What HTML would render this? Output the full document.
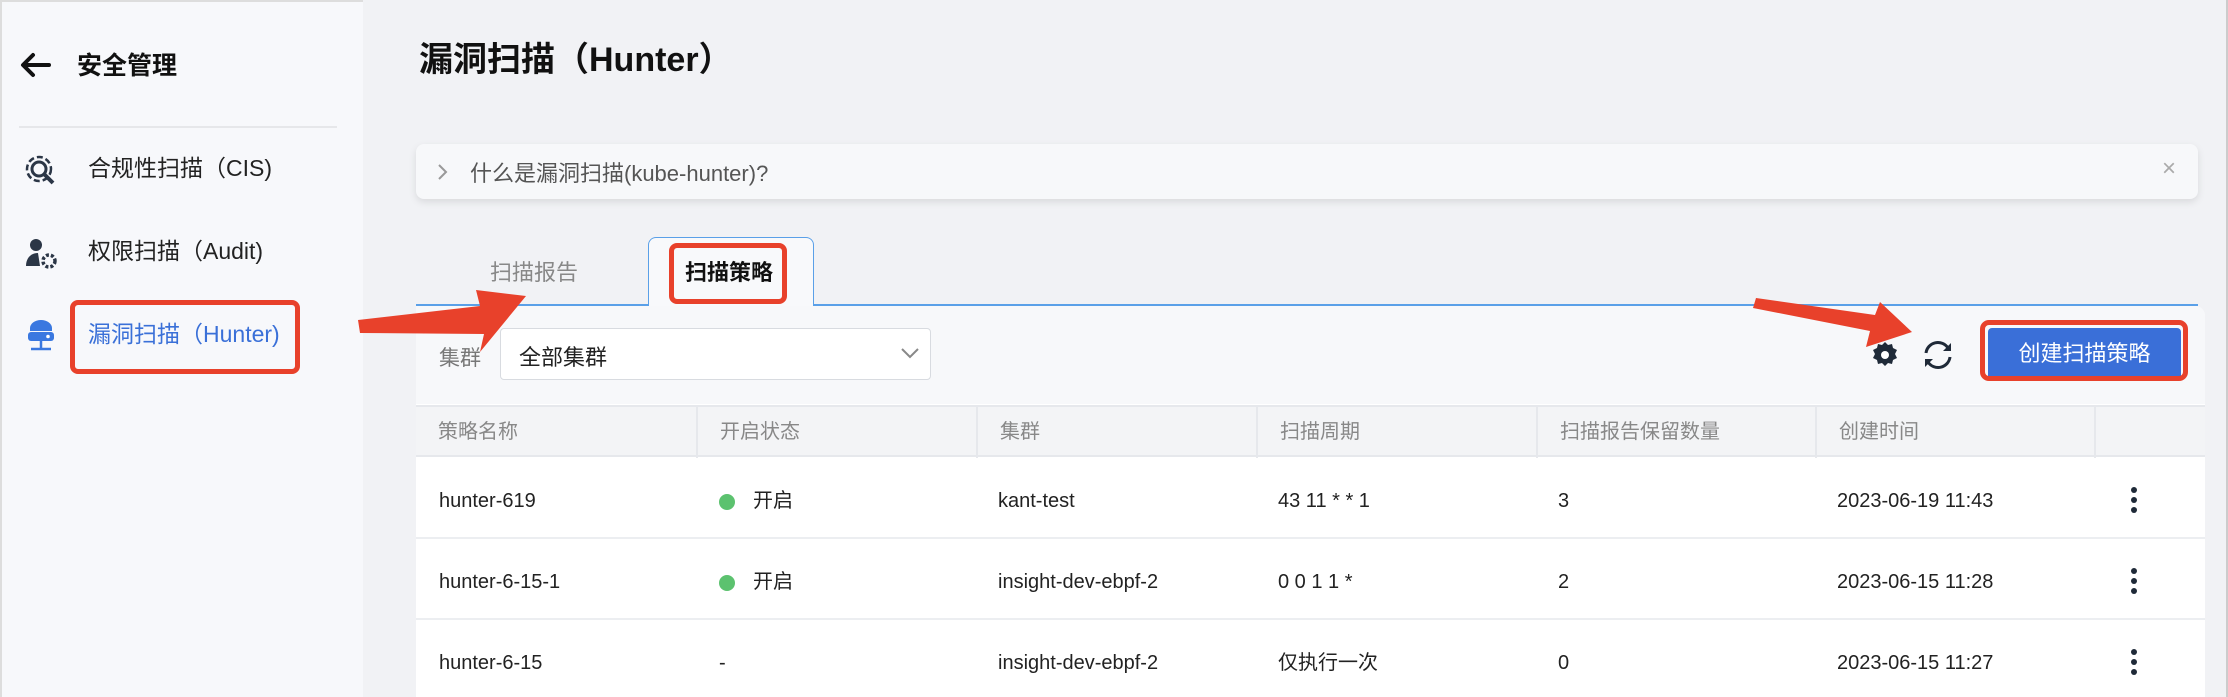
<!DOCTYPE html>
<html><head><meta charset="utf-8"><style>
*{box-sizing:border-box;margin:0;padding:0}
body{width:2228px;height:697px;overflow:hidden;position:relative;background:#f1f2f5;font-family:"Liberation Sans","Noto Sans CJK SC",sans-serif;color:#222}
.abs{position:absolute}
#side{left:0;top:0;width:363px;height:697px;background:#f7f8fb;border-left:2px solid #ddd;border-top:2px solid #ddd}
.mi{position:absolute;left:86px;font-size:23px;color:#222;line-height:30px}
.th{position:absolute;top:0;height:51px;line-height:51px;font-size:20px;color:#888;padding-left:22px;border-right:2px solid #e6e8ec}
.td{position:absolute;font-size:20px;color:#222;line-height:30px}
</style></head><body>
<div id="side" class="abs">
  <svg class="abs" style="left:17px;top:50px" width="34" height="26" viewBox="0 0 34 26"><path d="M30 13H5M14 3L4 13l10 10" stroke="#111" stroke-width="4" fill="none" stroke-linecap="round" stroke-linejoin="round"/></svg>
  <div class="abs" style="left:75px;top:44px;font-size:25px;font-weight:bold;color:#111">安全管理</div>
  <div class="abs" style="left:17px;top:124px;width:318px;height:2px;background:#e6e7ea"></div>
  <svg class="abs" style="left:22px;top:152px" width="34" height="34" viewBox="0 0 34 34"><circle cx="15" cy="15" r="12" stroke="#2b3646" stroke-width="2.5" fill="none" stroke-dasharray="6 3"/><circle cx="15" cy="15" r="7" stroke="#2b3646" stroke-width="3" fill="none"/><path d="M20 20l9 9" stroke="#2b3646" stroke-width="4"/></svg>
  <div class="mi" style="top:151px">合规性扫描（CIS)</div>
  <svg class="abs" style="left:22px;top:234px" width="34" height="34" viewBox="0 0 34 34"><circle cx="12" cy="9" r="6" fill="#2b3646"/><path d="M2 30c0-8 5-13 12-13l2 13z" fill="#2b3646"/><circle cx="25" cy="25" r="6" fill="none" stroke="#2b3646" stroke-width="3.5" stroke-dasharray="3 2"/></svg>
  <div class="mi" style="top:234px">权限扫描（Audit)</div>
  <svg class="abs" style="left:22px;top:316px" width="34" height="36" viewBox="0 0 34 36"><path d="M6 10a11 8 0 0 1 22 0v3H6z" fill="#3a78e0"/><rect x="4" y="14" width="26" height="9" rx="3" fill="#3a78e0"/><circle cx="24" cy="18.5" r="1.8" fill="#fff"/><path d="M17 23v8M7 31h20" stroke="#3a78e0" stroke-width="2.5"/></svg>
  <div class="mi" style="top:317px;color:#3a70d8">漏洞扫描（Hunter)</div>
  <div class="abs" style="left:68px;top:298px;width:230px;height:74px;border:5px solid #e8412b;border-radius:8px"></div>
</div>
<div class="abs" style="left:419px;top:32px;font-size:34px;font-weight:bold;color:#111">漏洞扫描（Hunter）</div>
<div class="abs" style="left:416px;top:144px;width:1782px;height:55px;background:#f7f8fa;border-radius:8px;box-shadow:0 3px 8px rgba(0,0,0,.1)"></div>
<svg class="abs" style="left:436px;top:163px" width="12" height="18" viewBox="0 0 12 18"><path d="M3 2l7 7-7 7" stroke="#999" stroke-width="2" fill="none"/></svg>
<div class="abs" style="left:470px;top:156px;font-size:22px;color:#555">什么是漏洞扫描(kube-hunter)?</div>
<div class="abs" style="left:2162px;top:155px;font-size:24px;color:#aaa">×</div>
<div class="abs" style="left:490px;top:255px;font-size:22px;color:#888">扫描报告</div>
<div class="abs" style="left:648px;top:237px;width:166px;height:69px;background:#f8f9fb;border:1px solid #5aa0e8;border-bottom:none;border-radius:8px 8px 0 0"></div>
<div class="abs" style="left:685px;top:255px;font-size:22px;font-weight:bold;color:#111">扫描策略</div>
<div class="abs" style="left:669px;top:243px;width:118px;height:61px;border:5px solid #e8412b;border-radius:8px"></div>
<div class="abs" style="left:416px;top:304px;width:232px;height:2px;background:#5aa0e8"></div>
<div class="abs" style="left:814px;top:304px;width:1384px;height:2px;background:#5aa0e8"></div>
<div class="abs" style="left:416px;top:306px;width:1789px;height:391px;background:#fff;border-top-right-radius:10px;overflow:hidden">
  <div class="abs" style="left:0;top:0;width:100%;height:98px;background:#f7f8fa"></div>
  <div class="abs" style="left:23px;top:36px;font-size:21px;color:#777">集群</div>
  <div class="abs" style="left:84px;top:22px;width:431px;height:52px;background:#fff;border:1px solid #d8dbe0;border-radius:4px"></div>
  <div class="abs" style="left:103px;top:34px;font-size:22px;color:#222">全部集群</div>
  <svg class="abs" style="left:484px;top:40px" width="20" height="14" viewBox="0 0 20 14"><path d="M2 3l8 8 8-8" stroke="#888" stroke-width="2" fill="none"/></svg>
  <svg class="abs" style="left:1454px;top:34px" width="30" height="30" viewBox="0 0 30 30"><path d="M15 2l3 3 4-1 1 4 4 2-2 4 2 4-4 2-1 4-4-1-3 3-3-3-4 1-1-4-4-2 2-4-2-4 4-2 1-4 4 1z" fill="#1f2a38"/><circle cx="15" cy="15" r="4" fill="#fff"/></svg>
  <svg class="abs" style="left:1505px;top:32px" width="34" height="34" viewBox="0 0 34 34"><path d="M5 15a12 12 0 0 1 22-5M29 19a12 12 0 0 1-22 5" stroke="#1f2a38" stroke-width="3" fill="none"/><path d="M30 5v8h-8z M4 29v-8h8z" fill="#1f2a38"/></svg>
  <div class="abs" style="left:1572px;top:22px;width:193px;height:52px;background:#3a6fd8;border-radius:4px;color:#fff;font-size:22px;text-align:center;line-height:52px">创建扫描策略</div>
  <div class="abs" style="left:1564px;top:14px;width:208px;height:61px;border:5px solid #e8412b;border-radius:9px"></div>
  <div class="abs" style="left:0;top:99px;width:100%;height:52px;background:#f3f4f6;border-top:2px solid #e6e8ec;border-bottom:2px solid #e6e8ec">
    <div class="th" style="left:0;width:282px">策略名称</div>
    <div class="th" style="left:282px;width:280px">开启状态</div>
    <div class="th" style="left:562px;width:280px">集群</div>
    <div class="th" style="left:842px;width:280px">扫描周期</div>
    <div class="th" style="left:1122px;width:279px">扫描报告保留数量</div>
    <div class="th" style="left:1401px;width:279px">创建时间</div>
  </div>
  <div class="abs" style="left:0;top:231px;width:100%;height:2px;background:#eceef1"></div>
  <div class="abs" style="left:0;top:312px;width:100%;height:2px;background:#eceef1"></div>
  <div class="td" style="left:23px;top:180px">hunter-619</div>
  <div class="abs" style="left:303px;top:188px;width:16px;height:16px;border-radius:50%;background:#5cc26f"></div>
  <div class="td" style="left:337px;top:180px">开启</div>
  <div class="td" style="left:582px;top:180px">kant-test</div>
  <div class="td" style="left:862px;top:180px">43 11 * * 1</div>
  <div class="td" style="left:1142px;top:180px">3</div>
  <div class="td" style="left:1421px;top:180px">2023-06-19 11:43</div>
  <div class="td" style="left:23px;top:261px">hunter-6-15-1</div>
  <div class="abs" style="left:303px;top:269px;width:16px;height:16px;border-radius:50%;background:#5cc26f"></div>
  <div class="td" style="left:337px;top:261px">开启</div>
  <div class="td" style="left:582px;top:261px">insight-dev-ebpf-2</div>
  <div class="td" style="left:862px;top:261px">0 0 1 1 *</div>
  <div class="td" style="left:1142px;top:261px">2</div>
  <div class="td" style="left:1421px;top:261px">2023-06-15 11:28</div>
  <div class="td" style="left:23px;top:342px">hunter-6-15</div>
  <div class="td" style="left:303px;top:342px">-</div>
  <div class="td" style="left:582px;top:342px">insight-dev-ebpf-2</div>
  <div class="td" style="left:862px;top:342px">仅执行一次</div>
  <div class="td" style="left:1142px;top:342px">0</div>
  <div class="td" style="left:1421px;top:342px">2023-06-15 11:27</div>
  <svg class="abs" style="left:1713px;top:180px" width="10" height="200" viewBox="0 0 10 200"><g fill="#1f2a38"><circle cx="5" cy="4" r="3"/><circle cx="5" cy="14" r="3"/><circle cx="5" cy="24" r="3"/><circle cx="5" cy="85" r="3"/><circle cx="5" cy="95" r="3"/><circle cx="5" cy="105" r="3"/><circle cx="5" cy="166" r="3"/><circle cx="5" cy="176" r="3"/><circle cx="5" cy="186" r="3"/></g></svg>
</div>
<div class="abs" style="left:2205px;top:0;width:23px;height:697px;background:#f1f2f5;border-right:2px solid #ccc"></div>
<svg class="abs" style="left:0;top:0" width="2228" height="697">
  <path d="M358 320L480 306 476 290 526 296 480 352 484 334 360 333z" fill="#e8412b"/>
  <path d="M1756 298L1875 315 1880 302 1912 332 1866 347 1870 331 1753 308z" fill="#e8412b"/>
</svg>
</body></html>
